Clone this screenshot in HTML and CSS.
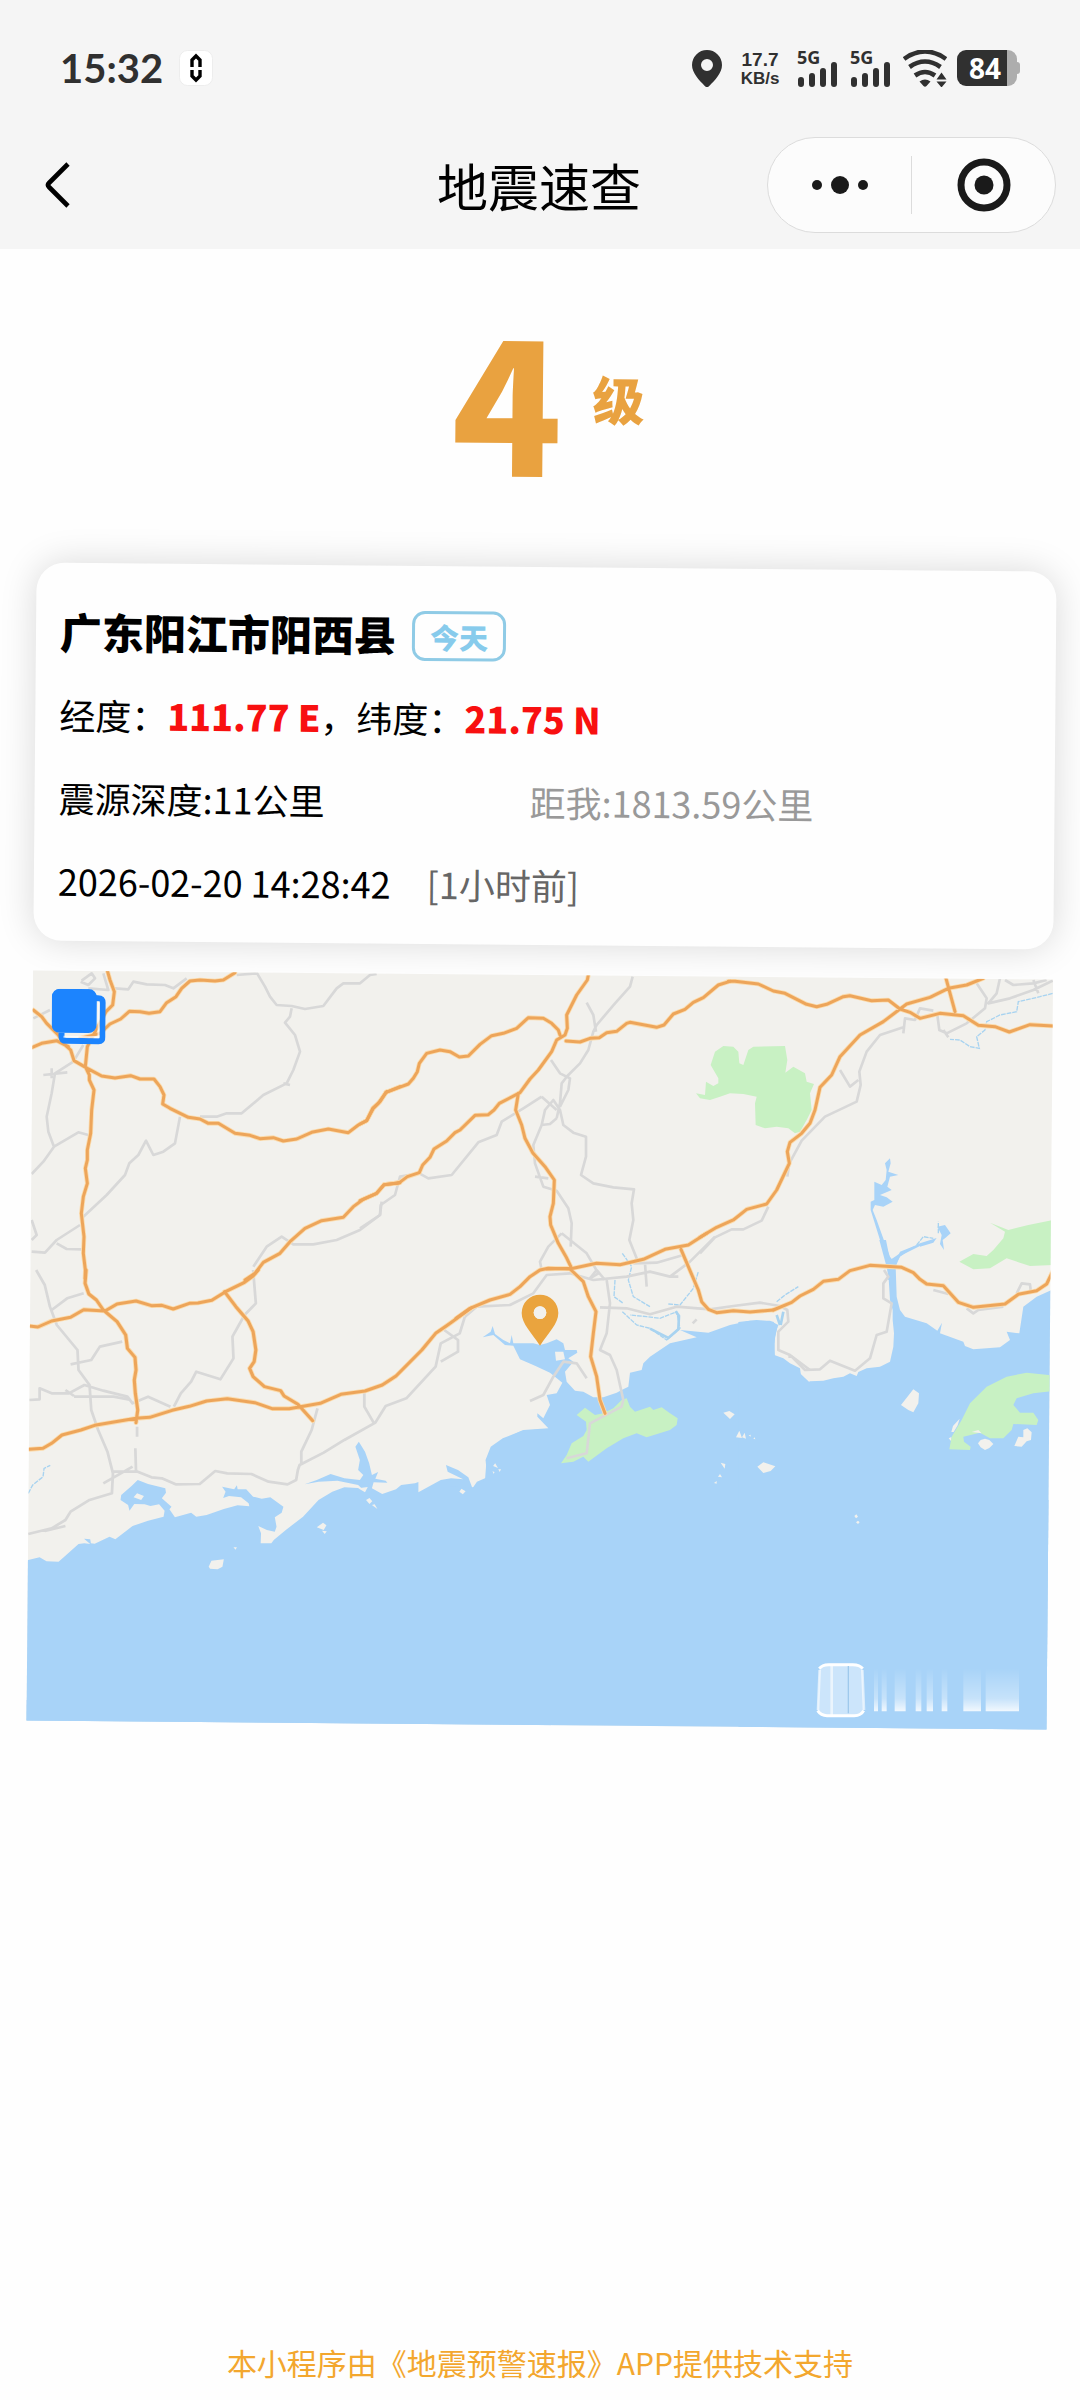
FILE: index.html
```html
<!DOCTYPE html>
<html lang="zh-CN">
<head>
<meta charset="utf-8">
<meta name="viewport" content="width=device-width, initial-scale=1">
<title>地震速查</title>
<link rel="stylesheet" href="styles.css">
</head>
<body>
<header class="top">
  <div class="status">
    <div class="status-left">
      <span class="clock">15:32</span>
      <svg class="app-badge" width="34" height="36" viewBox="0 0 34 36"><rect x="0.5" y="0.5" width="33" height="35" rx="8" fill="#fff" stroke="#ededed"/><path d="M13 17V10l4-4 4 4v7M13 20v6l4 4 4-4v-6" fill="none" stroke="#000" stroke-width="3.4"/></svg>
    </div>
    <div class="status-right">
      <svg class="pin" width="30" height="37" viewBox="0 0 30 37"><path fill="#303030" fill-rule="evenodd" d="M15 0a15 15 0 0 1 15 15c0 8-7 15-13 21.200a3 3 0 0 1-4 0C7 30 0 23 0 15A15 15 0 0 1 15 0zm0 9a6 6 0 1 0 0 12 6 6 0 0 0 0-12z"/></svg>
      <span class="speed"><span>17.7</span><span>KB/s</span></span>
      <span class="signal"><span class="net">5G</span><svg width="41" height="26" viewBox="0 0 41 26" stroke="#303030" stroke-width="6" stroke-linecap="round"><path d="M4 19v4M15 15v8M26 10v13M37 4v19"/></svg></span>
      <span class="signal"><span class="net">5G</span><svg width="41" height="26" viewBox="0 0 41 26" stroke="#303030" stroke-width="6" stroke-linecap="round"><path d="M4 19v4M15 15v8M26 10v13M37 4v19"/></svg></span>
      <svg class="wifi" width="44" height="37" viewBox="0 0 44 37"><path d="M1 9q21-15 42 0M6.500 17q15.500-11 31 0M12 25.500q10-7 20 0" fill="none" stroke="#303030" stroke-width="4.600"/><path d="M16.500 31.500q5.500-4 11 0l-4 4.500q-1.500 1.500-3 0zM33.500 29.500l5-7 5 7zM33.500 31.500h10l-5 6z" fill="#303030"/></svg>
      <span class="battery">84</span>
    </div>
  </div>
  <nav class="nav">
    <button class="back" aria-label="返回"><svg width="26" height="48" viewBox="0 0 26 48"><path d="M23 3L4 22q-2 2 0 4l19 19" fill="none" stroke="#000" stroke-width="4.600"/></svg></button>
    <h1 class="title">地震速查</h1>
    <div class="capsule">
      <button class="cap-btn" aria-label="更多"><svg width="58" height="20" viewBox="0 0 58 20" fill="#1a1a1a"><circle cx="6" cy="10" r="5"/><circle cx="29" cy="10" r="9"/><circle cx="52" cy="10" r="5"/></svg></button>
      <button class="cap-btn" aria-label="关闭"><svg width="54" height="54" viewBox="0 0 54 54"><circle cx="27" cy="27" r="23" fill="none" stroke="#1a1a1a" stroke-width="7"/><circle cx="27" cy="27" r="9.500" fill="#1a1a1a"/></svg></button>
    </div>
  </nav>
</header>

<main class="page">
  <section class="magnitude"><span class="mag-num">4</span><span class="mag-unit">级</span></section>

  <section class="card">
    <div class="place"><h2 class="place-name">广东阳江市阳西县</h2><span class="tag">今天</span></div>
    <p class="row">经度：<b class="coord">111.77 E</b>，纬度：<b class="coord">21.75 N</b></p>
    <p class="row split"><span>震源深度:11公里</span><span class="muted">距我:1813.59公里</span></p>
    <p class="row"><span>2026-02-20 14:28:42</span><span class="ago">[1小时前]</span></p>
  </section>

  <section class="map">
    <svg class="map-canvas" viewBox="30 975 1020 750" preserveAspectRatio="xMidYMid slice" role="img" aria-label="震中地图">
      <defs>
        <linearGradient id="fade" x1="0" y1="0" x2="0" y2="1"><stop offset="0" stop-color="#fff" stop-opacity="0"/><stop offset="0.700" stop-color="#fff" stop-opacity="0.350"/><stop offset="1" stop-color="#fff" stop-opacity="0.850"/></linearGradient>
      </defs>
      <g transform="rotate(-0.5 540 1324)">
        <!-- sea -->
        <g class="sea">
          <path transform="translate(0 1270) scale(.34436 .33333)" d="M0 870L82 870 115 862 135 874 170 875 185 862 228 822 245 820 262 822 244 806 262 808 264 820 275 821 318 800 335 808 385 768 430 752 475 740 478 722 462 703 437 708 420 703 390 702 376 722 372 705 350 690 352 675 382 648 400 630 430 642 480 655 482 668 470 685 498 710 492 718 508 742 555 728 570 740 600 735 650 717 690 706 724 709 722 700 700 682 665 678 648 684 655 665 645 650 680 658 688 646 690 658 715 658 735 680 760 686 785 682 823 710 818 728 798 742 803 770 798 785 775 780 750 768 758 790 757 820 788 820 795 810 830 780 880 740 925 690 965 665 1000 652 1050 655 1040 645 980 632 925 635 885 643 920 630 960 612 1000 625 1045 630 1055 615 1040 600 1045 570 1032 530 1042 515 1060 545 1072 580 1080 615 1098 606 1090 626 1120 632 1125 638 1085 637 1080 655 1110 672 1150 658 1165 645 1205 640 1215 636 1215 667 1280 630 1310 625 1345 628 1300 605 1295 585 1330 600 1360 622 1372 655 1385 635 1415 622 1410 570 1425 530 1460 505 1515 482 1600 476V1500H0z"/>
          <path transform="translate(450 1200) scale(.33333)" d="M105 840L110 775 125 745 160 718 220 690 295 685 262 650 262 640 280 655 300 615 290 585 320 580 337 548 300 518 255 497 210 478 190 437 165 435 130 405 98 412 122 395 128 378 135 402 160 420 180 430 185 405 190 430 250 430 270 435 290 430 320 418 340 430 345 450 380 450 382 458 355 475 370 485 345 515 350 545 375 572 400 575 430 592 460 592 500 578 515 570 535 560 540 518 575 510 580 490 600 470 660 430 740 412 690 390 775 398 840 375 900 362 960 362 985 375 980 390 972 430 975 470 1000 480 1020 495 1050 520 1080 548V960H0V860L70 862z"/>
          <path transform="translate(740 1240) scale(.33333)" d="M-5 246L50 240 100 245 112 260 105 290 103 345 130 355 150 370 180 385 185 420 200 430 210 424 250 422 280 415 310 410 330 400 350 408 355 396 380 385 420 380 450 365 460 320 462 280 458 240 458 210 450 180 445 100 418 0 438 0 450 60 465 50 480 40 540 10 540 18 480 48 467 80 470 170 480 210 495 230 560 250 592 272 606 248 600 280 670 305 675 318 700 328 780 322 810 300 800 275 838 280 850 200 890 170 935 150V1510H-5z"/>
          <path d="M500 1500H1060V1740H0V1700H500z"/>
          <path transform="translate(700 950) scale(.33333)" d="M523 695L545 705 557 690 560 660 555 640 570 625 572 640 565 665 595 675 570 680 562 710 575 720 540 735 560 742 578 755 550 770 525 765 518 780 530 810 548 860 570 920 585 940 600 905 650 885 600 920 583 950 585 990 565 990 560 935 540 870 512 780 512 755 523 750zM712 830L735 825 752 850 735 865 728 870 732 900 720 882 725 855zM660 880l50-16-10 14-40 12z"/>
        </g>
        <!-- parks and forests -->
        <g class="green">
          <path transform="translate(450 1200) scale(.33333)" d="M380 645L405 623 435 645 460 640 490 625 515 600 530 595 540 620 555 635 600 620 610 630 635 622 660 640 683 655 680 675 660 690 590 712 560 700 520 715 470 745 415 785 400 770 370 785 333 790 350 765 365 730 400 708 410 690 408 665z"/>
          <path transform="translate(740 1240) scale(.33333)" d="M628 628L635 590 665 540 690 490 740 440 800 410 860 398 950 408V452L880 460 830 475 820 495 840 518 880 518 895 540 890 555 820 552 815 570 790 595 750 595 720 578 670 590 672 605 692 620 690 630z"/>
          <path transform="translate(700 950) scale(.33333)" d="M-12 430L15 435 18 395 40 408 55 400 55 385 32 345 45 305 70 288 100 290 115 305 118 340 130 345 145 300 160 290 255 288 262 330 256 368 280 350 315 370 320 395 342 402 330 430 335 480 320 510 300 545 285 550 265 535 230 530 195 535 167 525 165 460 170 440 130 432 90 430 60 440 30 450 0 445zM778 935L820 912 860 918 880 900 910 865 915 845 870 818 925 840 985 825 1060 810V945L990 948 920 925 870 955 820 958z"/>
        </g>
        <!-- islands -->
        <g class="island">
          <path transform="translate(0 1270) scale(.34436 .33333)" d="M606 890l8-18 36-4-4 22-14 8-22-2zM920 772l18-14 10 8-8 14zM935 782l14 2-6 8zM1063 690l10-6 8 10-8 8zM1080 705l8-2 8 14zM1334 665l6-9 12 8-8 9zM388 682l10-12 20 8-8 12zM678 832h10l-4 7zM1432 588l6-8 8 14zM1430 604l6 2-2 6zM1447 598h8l-4 8zM1040 655l28-4-8 16z"/>
          <path transform="translate(450 1200) scale(.33333)" d="M315 455L340 455 345 478 318 482zM820 638l18-5 16 10-14 14zM858 712l10-20 8 22zM876 712l8-14 4 18zM922 800l18-13 36 12-14 14-22 6zM812 788l14 4-2 14zM804 830l6-8 6 10zM792 849l8-6v8zM896 706l6-2v6zM910 716l4-4 2 6z"/>
          <path transform="translate(740 1240) scale(.33333)" d="M483 495L520 448 537 460 535 490 520 517 505 510zM714 610L722 600 735 596 748 600 760 612 748 624 735 630 722 622zM823 618L835 590 850 592 850 570 862 565 875 577 873 600 860 604 845 620zM343 828l6-5 5 7-6 5zM348 847l6-5 5 5-5 5zM626 595l8-4-1 12zM634 576l5-18 20-22-6 20-12 20zM695 576l20-6 10 10z"/>
        </g>
        <!-- rivers -->
        <g class="river">
          <path transform="translate(700 950) scale(.33333)" d="M1058 130L1020 140 955 155 950 185 900 195 860 215 855 240 830 260 838 295 810 290 780 270 750 268M650 885l20-25 30 5M715 850v-35"/>
          <path transform="translate(450 1200) scale(.33333)" d="M517 160L545 200 535 240 550 290 600 320M495 240L492 290 520 310M517 335L560 375 600 385 650 420 690 385 680 335 630 355 590 350 540 345M655 312L690 315 730 265 745 215M980 305l25-20 40-25"/>
          <path class="wide" transform="translate(450 1200) scale(.33333)" d="M600 386l55 28 30-26 2-40-10-14M980 345l10 30M1000 335l-8 40"/>
          <path transform="translate(0 1270) scale(.34436 .33333)" d="M82 670L95 645 125 620 128 595 146 586"/>
        </g>
        <!-- local roads -->
        <g class="road-minor">
          <path transform="translate(0 950) scale(.33333)" d="M710 75l60-5M770 68L795 110 810 140 830 165 875 168 915 177 970 168 1010 115 1030 100 1080 100 1110 75 1130 72M875 175L870 200 855 218 885 255 900 305 880 360 860 400 790 435 725 490 680 490 650 500 600 500M540 500L525 580 490 605 460 615 438 572 415 615 388 640 375 675 320 735 250 800M345 115L385 118 400 95 440 103 495 105 520 115 560 85M242 95L265 105 285 85 275 70 245 92M310 70l15 50-60-5M250 285L220 335 165 370 155 430 140 500 145 545 162 590 235 547 265 555M162 590L130 635 95 672M1145 755L1140 795 1080 840 1010 870 940 883 880 883 845 860 800 890 760 950M95 905L135 908 170 870 240 825M170 880L200 897 245 898M130 375l72-8M155 355v30M95 810l15 45-15 15M100 205l50-25M850 400l20 5"/>
          <path transform="translate(360 950) scale(.33333)" d="M818 80L810 110 765 160 710 225 700 245 685 300 660 340 622 378 605 400 600 460 590 505M680 158L700 195 708 245M573 330L600 370 630 385 625 420 600 470M590 505L570 522 545 525 555 480 580 450 600 480 610 525 640 548 678 560 678 620 663 675 700 700 760 712 822 718 815 760 820 810 808 870 832 930M545 440l45 40M545 440L490 475 425 515 410 555 355 577 275 675 205 685 178 670 120 680 105 735 62 765 60 795 0 835M545 525L520 585 525 640 550 710 590 722 625 775 635 820 632 890M605 850L565 890 540 935 545 960M605 850L680 910 715 970 690 985M525 680l40 5"/>
          <path transform="translate(700 950) scale(.33333)" d="M610 232L540 255 500 305 478 365 482 405 470 455 375 500 305 572 268 640 262 680M420 360L450 410 475 390M205 770L185 812 130 838 95 838 45 862 0 910M830 100L860 145 855 175 800 220 740 250 718 240 712 195M745 262l-15-22M900 85L890 130 865 160 930 145 1000 120 1058 92M610 250L615 205 645 210 660 175 700 182M915 90L940 105 1000 100 1040 90M1000 90l15 40"/>
          <path transform="translate(0 1270) scale(.34436 .33333)" d="M105 0L130 45 145 110 165 165 225 240 228 300 260 345 265 420 285 480 312 545 328 610 325 670 260 690 205 725 190 750 150 775 82 792M150 120L195 85 243 70M205 283L265 270 290 230 355 215M85 390L115 388 115 355 150 370 200 370 245 345 300 362 370 380 385 400 430 380 495 410M215 380L330 380 380 390M190 360L215 378M735 0L743 100 710 135 675 200 678 265 640 328 570 305 555 335 525 370 505 410M398 470V500M393 535L395 605M328 605H400L440 622 470 625 510 643 580 642 625 603 660 610 730 612 780 635 835 643 860 630 865 600 870 585 940 548 1000 510 1090 458 1120 408 1180 385 1265 290 1280 220 1335 190 1350 140M922 415L905 480 875 545 875 585M1058 370V410L1085 458M1280 275L1330 245 1330 210 1290 180M300 640L385 590M190 768l-60 15"/>
          <path transform="translate(450 1200) scale(.33333)" d="M45 350L80 320 180 315 250 280 290 225 360 220 430 240 530 230 600 215 660 230 720 185 795 110M660 230h25M470 240L480 310 470 400 450 450 480 465 500 510 520 600 515 620 420 670 410 760 350 775M450 322L530 325 600 343 680 320 780 328 850 318 930 308 990 318 1012 330 1015 365 985 395 985 450 1020 465 1080 510M410 535L380 490 340 485 310 530 280 585 240 603M550 190L620 188 700 165M585 190L590 260M728 370l12-12M440 210l-20 25M440 210l25 30"/>
          <path transform="translate(740 1240) scale(.33333)" d="M145 350h10L195 390 240 388 270 362 345 392 390 355 410 285 440 275 455 190 430 175 430 130 445 110 432 90M830 160L845 130 870 133 872 150M680 205L700 220 715 210 790 200M580 150L625 162"/>
        </g>
        <!-- expressways: pale casing below, orange core above -->
        <g class="road-casing">
        <g id="highways">
          <path class="hw" transform="translate(0 950) scale(.33333)" d="M100 180L125 200 140 220 175 255 190 280 212 300 222 332 262 355 305 378 345 384 392 377 420 387 462 387 480 410 492 435 488 462 510 475 565 502 600 507 625 520 655 520 705 550 750 556 780 566 820 563 850 573 890 567 935 547 985 537 1045 548 1075 525 1100 512 1118 475 1140 455 1158 427 1200 410M95 293L125 280 170 272 205 290M322 62L330 90 343 125 338 165 318 185 280 255 262 290 256 350 268 375 268 390 282 420 275 480 272 550 262 600 262 630 256 655 262 700 250 740 244 790 252 860 250 910 256 960 255 985M705 68L670 90 645 93 600 90 570 93 545 115 528 140 500 158 480 185 447 190 420 185 388 184 362 207 330 222 300 250 240 265M735 990L765 970 790 937 840 910 870 875 915 835 965 812 1030 802 1060 770 1090 748 1130 730 1152 704 1200 698"/>
          <path class="hw" transform="translate(360 950) scale(.33333)" d="M118 412L145 402 160 385 172 365 178 340 200 310 240 300 270 305 298 321 325 318 360 283 395 257 430 250 470 235 505 203 550 205 575 220 595 240 600 255M110 700L118 698 142 680 178 668 188 645 210 622 222 597 260 573 285 548 300 540 345 496 385 494 402 480 418 460 480 428 510 387 535 360 575 305 590 270 615 255 622 235 620 195 650 135 682 90 686 70M78 427L118 412M475 430L467 480 485 525 495 565 518 608 555 650 583 690 580 760 570 800 572 825 595 880 618 920 635 955M618 273L660 276 690 265 718 263 740 248 770 244 800 220 810 217 890 232 912 225 940 192 975 178 1000 157 1030 143 1075 105 1110 94M1040 850L985 885 915 898 850 928 780 944 710 940 640 955 560 957"/>
          <path class="hw" transform="translate(360 950) scale(.33333)" d="M0 522L20 512 40 475 55 460 80 425M0 752L50 730 72 704 118 698"/>
          <path class="hw" transform="translate(700 950) scale(.33333)" d="M85 94H105L175 102 220 123 255 130 320 163 350 170 380 163 430 140 450 137 515 152 565 150 600 177 630 187 660 205 720 190 790 197 835 226 885 230 928 246 990 224 1060 228M850 85L800 105 745 115 690 142 620 162 600 177 550 215 480 255 420 320 395 375 360 412 345 480 330 520 305 550 270 577 262 605 268 640 230 720 200 762 140 778 100 810 50 832 0 862M738 85L765 185"/>
          <path class="hw" transform="translate(0 1270) scale(.34436 .33333)" d="M250 0L247 40 258 72 280 90 300 120 340 155 365 195 370 235 392 262 395 300 390 330 393 370 400 420 395 458M85 168L110 171 150 153 205 142 243 119 305 123 340 102 395 93 440 107 470 106 503 117 550 100 575 99 615 91 655 65 710 37 735 18 750 0M652 65L685 110 720 152 735 185 743 240 738 275 725 295 735 320 768 350 815 362 825 378 865 403 908 452M85 538L125 535 150 520 180 495 235 480 275 466 395 445 435 442 500 421 550 409 600 393 660 386 740 398 790 416 840 416 930 400 990 373 1060 363 1110 345 1150 318 1225 240 1265 190 1300 165 1370 113"/>
          <path class="hw" transform="translate(450 1200) scale(.33333)" d="M18 355L60 325 120 300 180 283 210 260 240 230 270 210 295 205 360 207 400 245 415 290 438 335 430 400 422 470 440 530 450 600 465 640M693 148L715 200 745 270 755 305 775 328 800 338 850 332 900 336 970 330"/>
          <path class="hw" transform="translate(740 1240) scale(.33333)" d="M100 210L155 187 180 168 220 148 250 124 295 118 330 92 390 76 485 82 520 98 540 118 560 132 610 137 655 187 700 202 795 192 835 163 890 152 920 132 940 90"/>
        </g>
        </g>
        <use href="#highways" class="road-core"/>
        <!-- epicentre marker -->
        <path transform="translate(450 1200) scale(.33333)" fill="#eaa43e" fill-rule="evenodd" d="M270 284a55 55 0 0 1 55 55c0 32-30 60-55 98-25-38-55-66-55-98a55 55 0 0 1 55-55zm0 35a19 19 0 1 0 0 38 19 19 0 0 0 0-38z"/>
        <circle cx="540" cy="1312.500" r="6.300" fill="#f2f1ed"/>
        <!-- map vendor watermark -->
        <g transform="translate(740 1240) scale(.33333)">
          <path d="M238 1285q10-14 30-14h70q20 0 30 14l4 125q-8 19-28 19h-82q-22 0-30-19z" fill="#fff" fill-opacity="0.420"/>
          <path d="M238 1286q8-12 28-12h72q22 0 30 12M233 1412q10 15 28 15h82q20 0 28-15" fill="none" stroke="#fff" stroke-width="9"/>
          <path d="M239 1290l-5 120M367 1290l5 120M275 1275v150" stroke="#fff" stroke-opacity="0.600" stroke-width="8"/>
          <path d="M325 1278v142" stroke="#9fc9ec" stroke-width="4"/>
          <path fill="url(#fade)" d="M402 1285h12v129h-12zM425 1285h15v129h-15zM464 1285h33v129h-33zM527 1285h17v129h-17zM560 1285h19v129h-19zM605 1285h17v129h-17zM670 1285h53v129h-53zM737 1285h100v129h-100z"/>
        </g>
      </g>
    </svg>
    <button class="layers" aria-label="切换图层"><svg width="54" height="56" viewBox="0 0 54 56"><path d="M43 9h3q5 0 5 5v34q0 4-4 4H15q-5 0-5-5v-3" fill="none" stroke="#1c84fe" stroke-width="6"/><path d="M47 12v36H12" fill="none" stroke="#fff" stroke-opacity="0.700" stroke-width="2"/><rect width="45" height="44" rx="8" fill="#1c84fe"/></svg></button>
  </section>
</main>

<footer class="foot">本小程序由《地震预警速报》APP提供技术支持</footer>
</body>
</html>
```

FILE: styles.css
```css
* { box-sizing: border-box; }
body {
  margin: 0;
  min-height: 100vh;
  display: flex;
  flex-direction: column;
  overflow-x: hidden;
  background: #fefefe;
  color: #000;
  font-family: "Noto Sans CJK SC", "Noto Sans", sans-serif;
  font-size: 36px;
}
h1, h2, p { margin: 0; }
button { padding: 0; border: 0; background: none; }
svg { display: block; }

/* system status bar and navigation */
.top { background: #f5f5f5; }
.status {
  height: 136px;
  padding: 0 63px 0 60px;
  display: flex;
  align-items: center;
  justify-content: space-between;
  color: #303030;
}
.status-left { display: flex; align-items: center; gap: 16px; }
.status-right { display: flex; align-items: center; }
.clock { font: 700 40px/48px Lato, sans-serif; }
.pin { margin-right: 17px; }
.speed {
  display: flex;
  flex-direction: column;
  width: 42px;
  margin-right: 16px;
  text-align: center;
  font: 700 19px/21px "Liberation Sans", sans-serif;
  white-space: nowrap;
}
.speed span + span { font-size: 17px; line-height: 18px; }
.signal { display: flex; flex-direction: column; width: 42px; height: 37px; margin-right: 11px; }
.signal svg { margin-top: -4px; flex: none; }
.net { font: 700 18px/15px "Noto Sans", sans-serif; }
.wifi { margin-right: 10px; }
.battery {
  position: relative;
  width: 60px;
  height: 36px;
  padding-left: 12px;
  border-radius: 9px;
  background: linear-gradient(90deg, #303030 50px, #adadad 50px);
  color: #fff;
  font: 700 28px/36px "Noto Sans", sans-serif;
  text-align: left;
}
.battery::after {
  content: "";
  position: absolute;
  left: 60px;
  top: 12px;
  width: 3px;
  height: 12px;
  border-radius: 0 3px 3px 0;
  background: #adadad;
}
.nav {
  height: 113px;
  padding: 0 24px 16px 38px;
  display: grid;
  grid-template-columns: 1fr auto 1fr;
  align-items: center;
}
.back { justify-self: start; width: 40px; display: flex; justify-content: center; }
.title { padding-left: 16px; margin-right: 32px; font-size: 51px; font-weight: 400; line-height: 64px; }
.capsule {
  justify-self: end;
  width: 289px;
  height: 96px;
  display: flex;
  align-items: center;
  border: 1px solid #dcdcdc;
  border-radius: 48px;
  background: #fcfcfc;
}
.cap-btn { flex: 1; height: 58px; display: flex; align-items: center; justify-content: center; }
.cap-btn + .cap-btn { border-left: 1px solid #dcdcdc; }

/* content sheet, hung slightly askew */
.page {
  flex: 1;
  padding: 0 30px;
  transform: rotate(0.5deg);
  transform-origin: 50% 1075px;
}
.magnitude {
  height: 318px;
  padding-bottom: 20px;
  display: flex;
  align-items: center;
  justify-content: center;
  gap: 30px;
  color: #e9a240;
  font-weight: 900;
}
.mag-num { font-size: 182px; line-height: 200px; }
.mag-unit { font-size: 52px; line-height: 60px; }
.card {
  padding: 26px 24px 19px;
  border-radius: 28px;
  background: #fefefe;
  box-shadow: 0 0 36px rgba(0, 0, 0, 0.15);
}
.place { height: 84px; display: flex; align-items: center; gap: 16px; }
.place-name { font-size: 42px; font-weight: 900; line-height: 84px; }
.tag {
  height: 50px;
  margin-top: 4px;
  padding: 0 15px;
  border: 3px solid #8fcbe6;
  border-radius: 13px;
  color: #87cbec;
  font-size: 29px;
  font-weight: 900;
  line-height: 44px;
}
.row { line-height: 83px; white-space: nowrap; }
.split { display: grid; grid-template-columns: 471px 1fr; }
.coord { color: #f81010; font-weight: 900; }
.muted { color: #999; }
.ago { margin-left: 36px; color: #666; }
.map { position: relative; margin-top: 30px; background: #f2f1ed; }
.map-canvas { width: 100%; height: 750px; }
.layers { position: absolute; left: 19px; top: 18px; }

/* map feature styles */
.sea { fill: #a8d3f8; }
.green { fill: #c8f1c3; }
.island { fill: #f2f1ed; }
.river { fill: none; stroke: #a8d3f0; stroke-width: 4; stroke-dasharray: 14 3; }
.river .wide { stroke-width: 8; stroke-dasharray: none; }
.road-minor { fill: none; stroke: #d8d8d8; stroke-width: 8; stroke-linejoin: round; }
.hw { fill: none; stroke: inherit; stroke-width: inherit; stroke-linejoin: round; stroke-linecap: round; }
.road-casing { stroke: #fbdcae; stroke-width: 14; }
.road-core { stroke: #eda55a; stroke-width: 9; }

.foot {
  padding: 0 30px 16px;
  color: #f3a72e;
  font-size: 30px;
  line-height: 44px;
  text-align: center;
}
```
